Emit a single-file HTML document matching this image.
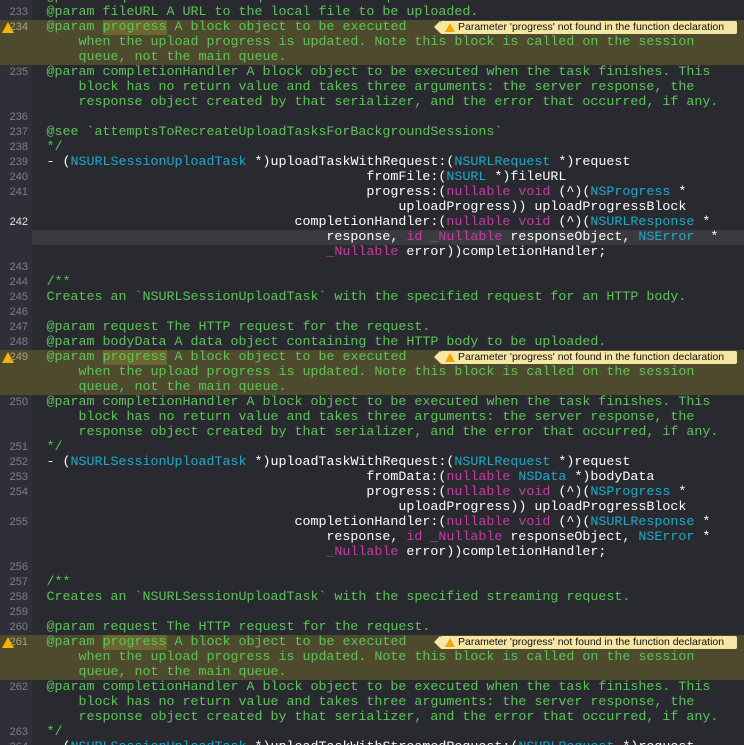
<!DOCTYPE html>
<html><head><meta charset="utf-8"><style>
html,body{margin:0;padding:0;background:#292a30;width:744px;height:745px;overflow:hidden}
#ed{position:relative;width:744px;height:745px;font-family:"Liberation Mono","DejaVu Sans Mono",monospace;font-size:13.33px;color:#fff}
#gut{position:absolute;left:0;top:0;width:32px;height:745px;background:#2f3037;border-right:1px solid #26272c}
.l{position:absolute;left:0;width:744px;height:15px;line-height:15px;white-space:pre}
.n{position:absolute;left:0;width:28px;text-align:right;font-family:"Liberation Sans",sans-serif;font-size:11px;color:#7e7f85}
.t{position:absolute;left:46.5px}
.c{color:#5fc35a}
.k{color:#c43da3}
.ty{color:#21a9c9}
.w{background:#4d4a2d}
.w .n{color:#aaa27a}
.cur{background:#3a3b40}
.hw{background:#6c6631}
.warn{position:absolute;left:2px;top:2px;width:0;height:0;border-left:6px solid transparent;border-right:6px solid transparent;border-bottom:11px solid #f6b500}
.bub{position:absolute;left:440px;top:1px;width:297px;height:13px;background:#f6e6a4;border-radius:2px;font-family:"Liberation Sans",sans-serif;font-size:10.5px;line-height:13px;color:#111}
.bub:before{content:"";position:absolute;left:-6px;top:0;border-top:6.5px solid transparent;border-bottom:6.5px solid transparent;border-right:6px solid #f6e6a4}
.bub .tri{position:absolute;left:5px;top:2px;border-left:5px solid transparent;border-right:5px solid transparent;border-bottom:9px solid #f0a800}
.bub span.tx{position:absolute;left:18px;top:0;white-space:pre}
</style></head><body><div id="ed"><div id="gut"></div>

<div class="l" style="top:-10px"><span class="n">232</span><span class="t c">@param request The HTTP request for the request.</span></div>
<div class="l" style="top:5px"><span class="n">233</span><span class="t c">@param fileURL A URL to the local file to be uploaded.</span></div>
<div class="l w" style="top:20px"><span class="warn"></span><span class="n">234</span><span class="t c">@param <span class="hw">progress</span> A block object to be executed</span><div class="bub"><span class="tri"></span><span class="tx">Parameter 'progress' not found in the function declaration</span></div></div>
<div class="l w" style="top:35px"><span class="t c">    when the upload progress is updated. Note this block is called on the session</span></div>
<div class="l w" style="top:50px"><span class="t c">    queue, not the main queue.</span></div>
<div class="l" style="top:65px"><span class="n">235</span><span class="t c">@param completionHandler A block object to be executed when the task finishes. This</span></div>
<div class="l" style="top:80px"><span class="t c">    block has no return value and takes three arguments: the server response, the</span></div>
<div class="l" style="top:95px"><span class="t c">    response object created by that serializer, and the error that occurred, if any.</span></div>
<div class="l" style="top:110px"><span class="n">236</span></div>
<div class="l" style="top:125px"><span class="n">237</span><span class="t c">@see `attemptsToRecreateUploadTasksForBackgroundSessions`</span></div>
<div class="l" style="top:140px"><span class="n">238</span><span class="t c">*/</span></div>
<div class="l" style="top:155px"><span class="n">239</span><span class="t">- (<span class="ty">NSURLSessionUploadTask</span> *)uploadTaskWithRequest:(<span class="ty">NSURLRequest</span> *)request</span></div>
<div class="l" style="top:170px"><span class="n">240</span><span class="t">                                        fromFile:(<span class="ty">NSURL</span> *)fileURL</span></div>
<div class="l" style="top:185px"><span class="n">241</span><span class="t">                                        progress:(<span class="k">nullable void</span> (^)(<span class="ty">NSProgress</span> *</span></div>
<div class="l" style="top:200px"><span class="t">                                            uploadProgress)) uploadProgressBlock</span></div>
<div class="l" style="top:215px"><span class="n" style="color:#e6e6e6">242</span><span class="t">                               completionHandler:(<span class="k">nullable void</span> (^)(<span class="ty">NSURLResponse</span> *</span></div>
<div class="l cur" style="top:230px;left:32px;width:712px"><span class="t" style="left:14.5px">                                   response, <span class="k">id _Nullable</span> responseObject, <span class="ty">NSError</span>  *</span></div>
<div class="l" style="top:245px"><span class="t">                                   <span class="k">_Nullable</span> error))completionHandler;</span></div>
<div class="l" style="top:260px"><span class="n">243</span></div>
<div class="l" style="top:275px"><span class="n">244</span><span class="t c">/**</span></div>
<div class="l" style="top:290px"><span class="n">245</span><span class="t c">Creates an `NSURLSessionUploadTask` with the specified request for an HTTP body.</span></div>
<div class="l" style="top:305px"><span class="n">246</span></div>
<div class="l" style="top:320px"><span class="n">247</span><span class="t c">@param request The HTTP request for the request.</span></div>
<div class="l" style="top:335px"><span class="n">248</span><span class="t c">@param bodyData A data object containing the HTTP body to be uploaded.</span></div>
<div class="l w" style="top:350px"><span class="warn"></span><span class="n">249</span><span class="t c">@param <span class="hw">progress</span> A block object to be executed</span><div class="bub"><span class="tri"></span><span class="tx">Parameter 'progress' not found in the function declaration</span></div></div>
<div class="l w" style="top:365px"><span class="t c">    when the upload progress is updated. Note this block is called on the session</span></div>
<div class="l w" style="top:380px"><span class="t c">    queue, not the main queue.</span></div>
<div class="l" style="top:395px"><span class="n">250</span><span class="t c">@param completionHandler A block object to be executed when the task finishes. This</span></div>
<div class="l" style="top:410px"><span class="t c">    block has no return value and takes three arguments: the server response, the</span></div>
<div class="l" style="top:425px"><span class="t c">    response object created by that serializer, and the error that occurred, if any.</span></div>
<div class="l" style="top:440px"><span class="n">251</span><span class="t c">*/</span></div>
<div class="l" style="top:455px"><span class="n">252</span><span class="t">- (<span class="ty">NSURLSessionUploadTask</span> *)uploadTaskWithRequest:(<span class="ty">NSURLRequest</span> *)request</span></div>
<div class="l" style="top:470px"><span class="n">253</span><span class="t">                                        fromData:(<span class="k">nullable</span> <span class="ty">NSData</span> *)bodyData</span></div>
<div class="l" style="top:485px"><span class="n">254</span><span class="t">                                        progress:(<span class="k">nullable void</span> (^)(<span class="ty">NSProgress</span> *</span></div>
<div class="l" style="top:500px"><span class="t">                                            uploadProgress)) uploadProgressBlock</span></div>
<div class="l" style="top:515px"><span class="n">255</span><span class="t">                               completionHandler:(<span class="k">nullable void</span> (^)(<span class="ty">NSURLResponse</span> *</span></div>
<div class="l" style="top:530px"><span class="t">                                   response, <span class="k">id _Nullable</span> responseObject, <span class="ty">NSError</span> *</span></div>
<div class="l" style="top:545px"><span class="t">                                   <span class="k">_Nullable</span> error))completionHandler;</span></div>
<div class="l" style="top:560px"><span class="n">256</span></div>
<div class="l" style="top:575px"><span class="n">257</span><span class="t c">/**</span></div>
<div class="l" style="top:590px"><span class="n">258</span><span class="t c">Creates an `NSURLSessionUploadTask` with the specified streaming request.</span></div>
<div class="l" style="top:605px"><span class="n">259</span></div>
<div class="l" style="top:620px"><span class="n">260</span><span class="t c">@param request The HTTP request for the request.</span></div>
<div class="l w" style="top:635px"><span class="warn"></span><span class="n">261</span><span class="t c">@param <span class="hw">progress</span> A block object to be executed</span><div class="bub"><span class="tri"></span><span class="tx">Parameter 'progress' not found in the function declaration</span></div></div>
<div class="l w" style="top:650px"><span class="t c">    when the upload progress is updated. Note this block is called on the session</span></div>
<div class="l w" style="top:665px"><span class="t c">    queue, not the main queue.</span></div>
<div class="l" style="top:680px"><span class="n">262</span><span class="t c">@param completionHandler A block object to be executed when the task finishes. This</span></div>
<div class="l" style="top:695px"><span class="t c">    block has no return value and takes three arguments: the server response, the</span></div>
<div class="l" style="top:710px"><span class="t c">    response object created by that serializer, and the error that occurred, if any.</span></div>
<div class="l" style="top:725px"><span class="n">263</span><span class="t c">*/</span></div>
<div class="l" style="top:740px"><span class="n">264</span><span class="t">- (<span class="ty">NSURLSessionUploadTask</span> *)uploadTaskWithStreamedRequest:(<span class="ty">NSURLRequest</span> *)request</span></div>
</div></body></html>
